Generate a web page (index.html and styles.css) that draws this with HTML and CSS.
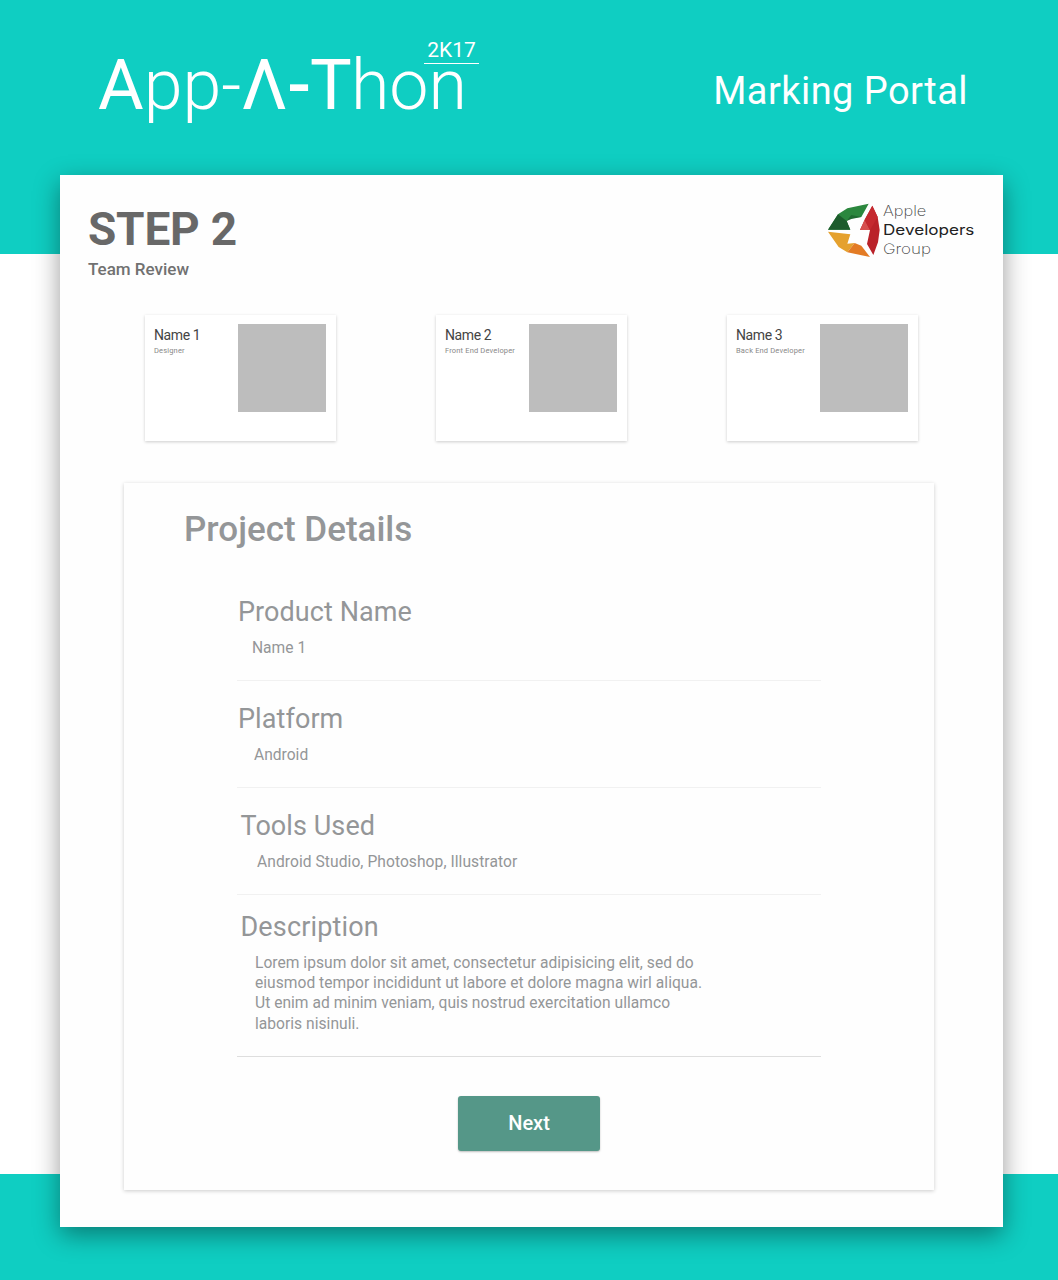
FILE: index.html
```html
<!DOCTYPE html>
<html lang="en">
<head>
<meta charset="utf-8">
<title>App-A-Thon Marking Portal</title>
<link rel="stylesheet" href="styles.css">
</head>
<body>
<header class="banner">
  <h1 class="brand"><span class="strong">A</span><span class="thin">pp</span><span class="thin">-</span><span class="strong">Λ</span><span class="heavy">-</span><span class="strong tee">T</span><span class="thin">hon</span><span class="year">2K17</span></h1>
  <div class="portal">Marking Portal</div>
</header>
<main class="sheet">
  <div class="sheet-head">
    <div>
      <h2 class="step">STEP 2</h2>
      <p class="step-name">Team Review</p>
    </div>
    <svg class="logo" viewBox="0 0 480 210" role="img" aria-label="Apple Developers Group">
      <path fill="#2b873e" d="M24 104 54 58 82 40 146 26 124 66 94 68 80 78 91 104z"/>
      <path fill="#1d5c2c" d="M24 104 54 58 80 78 91 104z"/>
      <path fill="#1f6a31" d="M80 78 94 60 124 66 94 72z"/>
      <path fill="#e5a12e" d="M24 110 91 118 82 146 104 144 82 172 56 156z"/>
      <path fill="#e37b25" d="M82 172 104 144 124 152 150 186z"/>
      <path fill="#ba2229" d="M157 32 173 66 179 105 174 142 160 180 141 147 150 105 120 105 134 74z"/>
      <path fill="#d64f4e" d="M134 74 150 105H120z"/>
      <path fill="#c5292f" d="M157 32 173 66 150 105 134 74z"/>
      <g class="logo-text">
        <text x="189" y="62" textLength="130" lengthAdjust="spacingAndGlyphs">Apple</text>
        <text class="logo-bold" x="189" y="119" textLength="274" lengthAdjust="spacingAndGlyphs">Developers</text>
        <text x="189" y="178" textLength="144" lengthAdjust="spacingAndGlyphs">Group</text>
      </g>
    </svg>
  </div>

  <section class="team">
    <article class="member"><div><h3>Name 1</h3><p>Designer</p></div><div class="photo"></div></article>
    <article class="member"><div><h3>Name 2</h3><p>Front End Developer</p></div><div class="photo"></div></article>
    <article class="member"><div><h3>Name 3</h3><p>Back End Developer</p></div><div class="photo"></div></article>
  </section>

  <section class="panel">
    <h2 class="panel-title">Project Details</h2>
    <dl class="fields">
      <div class="field product"><dt>Product Name</dt><dd>Name 1</dd></div>
      <div class="field platform"><dt>Platform</dt><dd>Android</dd></div>
      <div class="field tools"><dt>Tools Used</dt><dd>Android Studio, Photoshop, Illustrator</dd></div>
      <div class="field description"><dt>Description</dt><dd>Lorem ipsum dolor sit amet, consectetur adipisicing elit, sed do<br>eiusmod tempor incididunt ut labore et dolore magna wirl aliqua.<br>Ut enim ad minim veniam, quis nostrud exercitation ullamco<br>laboris nisinuli.</dd></div>
    </dl>
    <button class="next" type="button">Next</button>
  </section>
</main>
</body>
</html>
```

FILE: styles.css
```css
* { box-sizing: border-box; }
h1, h2, h3, p, dl, dd { margin: 0; }
body {
  margin: 0;
  height: 1280px;
  overflow: hidden;
  font-family: Roboto, "Liberation Sans", sans-serif;
  background: linear-gradient(#0fcec2 254px, #fff 254px, #fff 1174px, #0fcec2 1174px);
}
.banner {
  height: 175px;
  padding: 50px 90px 0 98px;
  display: flex;
  justify-content: space-between;
  color: #fff;
}
.brand {
  position: relative;
  height: 70px;
  font-size: 70px;
  line-height: 70px;
  font-weight: 300;
  white-space: nowrap;
}
.strong { font-weight: 400; }
.heavy { font-weight: 500; }
.thin { font-weight: 300; }
.tee { margin: 0 -1px; }
.year {
  position: absolute;
  left: 326px;
  top: -11px;
  width: 55px;
  height: 25px;
  border-bottom: 1px solid #fff;
  font-size: 21px;
  line-height: 22px;
  font-weight: 400;
  text-align: center;
}
.portal {
  padding-top: 21px;
  font-size: 38px;
  line-height: 40px;
  letter-spacing: .45px;
}
.sheet {
  width: 943px;
  height: 1052px;
  margin-left: 60px;
  padding: 0 29px;
  background: #fefefe;
  box-shadow: 0 8px 24px rgba(0, 0, 0, .4);
}
.sheet-head {
  height: 140px;
  padding-top: 31px;
  display: flex;
  justify-content: space-between;
}
.step {
  margin-left: -1px;
  font-size: 46px;
  line-height: 46px;
  font-weight: 700;
  letter-spacing: -.2px;
  color: #686868;
}
.step-name {
  margin: 7px 0 0 -1px;
  font-size: 17px;
  line-height: 20px;
  font-weight: 500;
  color: #717171;
}
.logo { width: 160px; height: 70px; margin: -11px -6px 0 0; }
.logo-text { font-family: Inter, sans-serif; font-size: 43px; font-weight: 200; fill: #444; }
.logo-bold { font-weight: 400; fill: #222; }
.team {
  padding: 0 56px;
  display: flex;
  justify-content: space-between;
}
.member {
  width: 191px;
  height: 126px;
  padding: 9px 10px 0 9px;
  display: flex;
  justify-content: space-between;
  background: #fff;
  box-shadow: 0 1px 3px rgba(0, 0, 0, .2);
}
.member h3 {
  margin-top: 3px;
  font-size: 14px;
  line-height: 16px;
  font-weight: 400;
  letter-spacing: -.4px;
  color: #444;
}
.member p {
  width: 80px;
  margin-top: 3px;
  font-size: 7.5px;
  line-height: 10px;
  letter-spacing: .16px;
  color: #888;
  white-space: nowrap;
}
.photo { width: 88px; height: 88px; margin-left: -20px; background: #bdbdbd; }
.panel {
  height: 707px;
  margin: 42px 40px 0 35px;
  padding: 27px 60px 0;
  display: flex;
  flex-direction: column;
  background: #fefefe;
  box-shadow: 0 1px 4px rgba(0, 0, 0, .2);
}
.panel-title {
  font-size: 35px;
  line-height: 40px;
  font-weight: 500;
  color: #949698;
}
.fields { width: 584px; margin: 24px 0 0 53px; color: #949698; }
.field { height: 107px; padding-top: 22px; border-bottom: 1px solid #f1f1f1; }
.field dt { padding-left: 1px; font-size: 27px; line-height: 32px; letter-spacing: .08px; }
.field dd { margin-top: 10px; padding-left: 15px; font-size: 15.6px; line-height: 20px; }
.platform dd { padding-left: 17px; }
.tools dt { padding-left: 3.5px; }
.tools dd { padding-left: 20px; letter-spacing: .06px; }
.description { height: 162px; padding-top: 16px; border-color: #dedede; }
.description dt { padding-left: 3.5px; letter-spacing: .15px; }
.description dd { margin-top: 9.6px; padding-left: 18px; line-height: 20.4px; letter-spacing: .02px; white-space: nowrap; }
.next {
  align-self: center;
  width: 142px;
  height: 55px;
  margin-top: 39px;
  padding: 0;
  border: 0;
  border-radius: 3px;
  background: #559788;
  box-shadow: 0 1px 2px rgba(0, 0, 0, .25);
  color: #fff;
  font: 500 20px/55px Roboto, sans-serif;
}
```
